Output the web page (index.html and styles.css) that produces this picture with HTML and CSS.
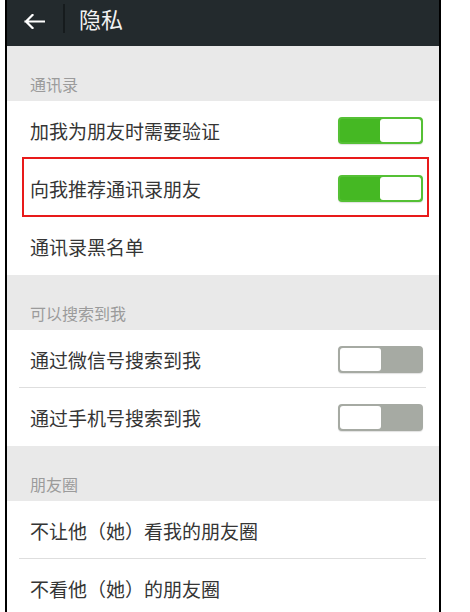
FILE: index.html
```html
<!DOCTYPE html>
<html lang="zh-CN">

<head>
    <meta charset="UTF-8">
    <meta name="viewport" content="width=device-width, initial-scale=1.0">
    <title>隐私</title>
    <link rel="stylesheet" href="styles.css">
</head>

<body>
    <div class="phone">
        <div class="topBar">
            <svg class="backIcon" width="21" height="15" viewBox="0 0 21 15">
                <path d="M1.5 7.5 H20 M8.5 1 L2 7.5 L8.5 14" fill="none" stroke="#fff" stroke-width="2.2" stroke-linecap="square" />
            </svg>
            <span class="barLine"></span>
            <span class="barTitle">隐私</span>
        </div>

        <div class="groupTitle">通讯录</div>
        <div class="row">
            <span>加我为朋友时需要验证</span>
            <div class="switch on"><div class="knob"></div></div>
        </div>
        <div class="row marked">
            <span>向我推荐通讯录朋友</span>
            <div class="switch on"><div class="knob"></div></div>
        </div>
        <div class="row">
            <span>通讯录黑名单</span>
        </div>

        <div class="groupTitle">可以搜索到我</div>
        <div class="row">
            <span>通过微信号搜索到我</span>
            <div class="switch"><div class="knob"></div></div>
        </div>
        <div class="row line">
            <span>通过手机号搜索到我</span>
            <div class="switch"><div class="knob"></div></div>
        </div>

        <div class="groupTitle">朋友圈</div>
        <div class="row">
            <span>不让他（她）看我的朋友圈</span>
        </div>
        <div class="row line">
            <span>不看他（她）的朋友圈</span>
        </div>
    </div>
</body>

</html>
```

FILE: styles.css
```css
body {
    margin: 0;
    background: #fff;
    font-family: "Noto Sans CJK SC", "Noto Sans", sans-serif;
}

.phone {
    width: 432px;
    height: 612px;
    margin-left: 5px;
    border-left: 2px solid #000;
    border-right: 2px solid #000;
    overflow: hidden;
}

.topBar {
    height: 46px;
    box-sizing: border-box;
    padding: 0 0 10px 17px;
    background: #232a2d;
    display: flex;
    align-items: center;
}

.backIcon {
    margin-top: 7px;
}

.barLine {
    width: 2px;
    height: 29px;
    margin-left: 18px;
    background: #161b1d;
}

.barTitle {
    margin-left: 14px;
    font-size: 22px;
    line-height: 26px;
    color: #f2f2f2;
}

.groupTitle {
    height: 55px;
    box-sizing: border-box;
    padding: 0 0 7px 23px;
    background: #e9e9e9;
    display: flex;
    align-items: flex-end;
    font-size: 16px;
    line-height: 20px;
    color: #9b9b9b;
}

.row {
    position: relative;
    height: 58px;
    box-sizing: border-box;
    padding: 0 16px 0 23px;
    display: flex;
    align-items: center;
    justify-content: space-between;
    font-size: 19px;
    color: #353535;
}

.line::before {
    content: "";
    position: absolute;
    top: -1px;
    left: 12px;
    right: 13px;
    height: 1px;
    background: #dedede;
}

.marked::after {
    content: "";
    position: absolute;
    top: -2px;
    left: 15px;
    right: 10px;
    bottom: 0;
    border: 2px solid #e81a1a;
}

.switch {
    width: 85px;
    height: 27px;
    box-sizing: border-box;
    border: 2px solid #a6aaa3;
    border-radius: 4px;
    background: #a6aaa3;
    display: flex;
    justify-content: flex-start;
    box-shadow: 0 1px 1px #e2e2e2;
}

.switch.on {
    border-color: #55c035;
    background: #45b823;
    justify-content: flex-end;
}

.knob {
    width: 41px;
    background: #fff;
    border-radius: 3px;
}
```
